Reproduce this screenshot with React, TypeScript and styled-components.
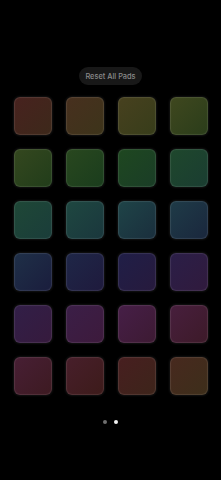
import React from 'react'
import styled, { createGlobalStyle } from 'styled-components'

const GlobalStyle = createGlobalStyle`
  html, body {
    margin: 0;
    padding: 0;
    background: #000;
    font-family: Inter, 'Noto Sans', sans-serif;
  }
`

const Screen = styled.div`
  width: 221px;
  height: 480px;
  background: #000;
  display: flex;
  flex-direction: column;
  align-items: center;
  padding-top: 67px;
  box-sizing: border-box;
`

const ResetButton = styled.button`
  height: 18px;
  padding: 0 6px;
  border: none;
  border-radius: 9px;
  background: #181818;
  color: #8a8a8a;
  font-family: Inter, 'Noto Sans', sans-serif;
  font-size: 7.4px;
  font-weight: 500;
  cursor: pointer;
`

const PadGrid = styled.div`
  margin-top: 12px;
  display: grid;
  grid-template-columns: repeat(4, 38px);
  grid-auto-rows: 38px;
  column-gap: 14px;
  row-gap: 14px;
`

const Pad = styled.div<{ $hue: number }>`
  border-radius: 6px;
  background: linear-gradient(
    135deg,
    hsl(${({ $hue }) => $hue}, 40%, 20%),
    hsl(${({ $hue }) => $hue + 20}, 40%, 17%)
  );
  box-shadow: inset 0 0 1px 1px rgba(255, 255, 255, 0.1),
    0 0 2px 1px rgba(255, 255, 255, 0.07);
`

const Dots = styled.div`
  margin-top: 25px;
  display: flex;
  gap: 7px;
`

const Dot = styled.span<{ $active?: boolean }>`
  width: 4px;
  height: 4px;
  border-radius: 50%;
  background: ${({ $active }) => ($active ? '#f2f2f2' : '#6e6e6e')};
`

// hue for each pad, left to right, top to bottom
const pads = [
  5, 25, 50, 72,
  88, 105, 122, 140,
  155, 170, 185, 198,
  215, 228, 242, 258,
  268, 282, 298, 315,
  328, 342, 358, 15,
]

export default function App() {
  return (
    <>
      <GlobalStyle />
      <Screen>
        <ResetButton>Reset All Pads</ResetButton>
        <PadGrid>
          {pads.map((hue, i) => (
            <Pad key={i} $hue={hue} />
          ))}
        </PadGrid>
        <Dots>
          <Dot />
          <Dot $active />
        </Dots>
      </Screen>
    </>
  )
}
